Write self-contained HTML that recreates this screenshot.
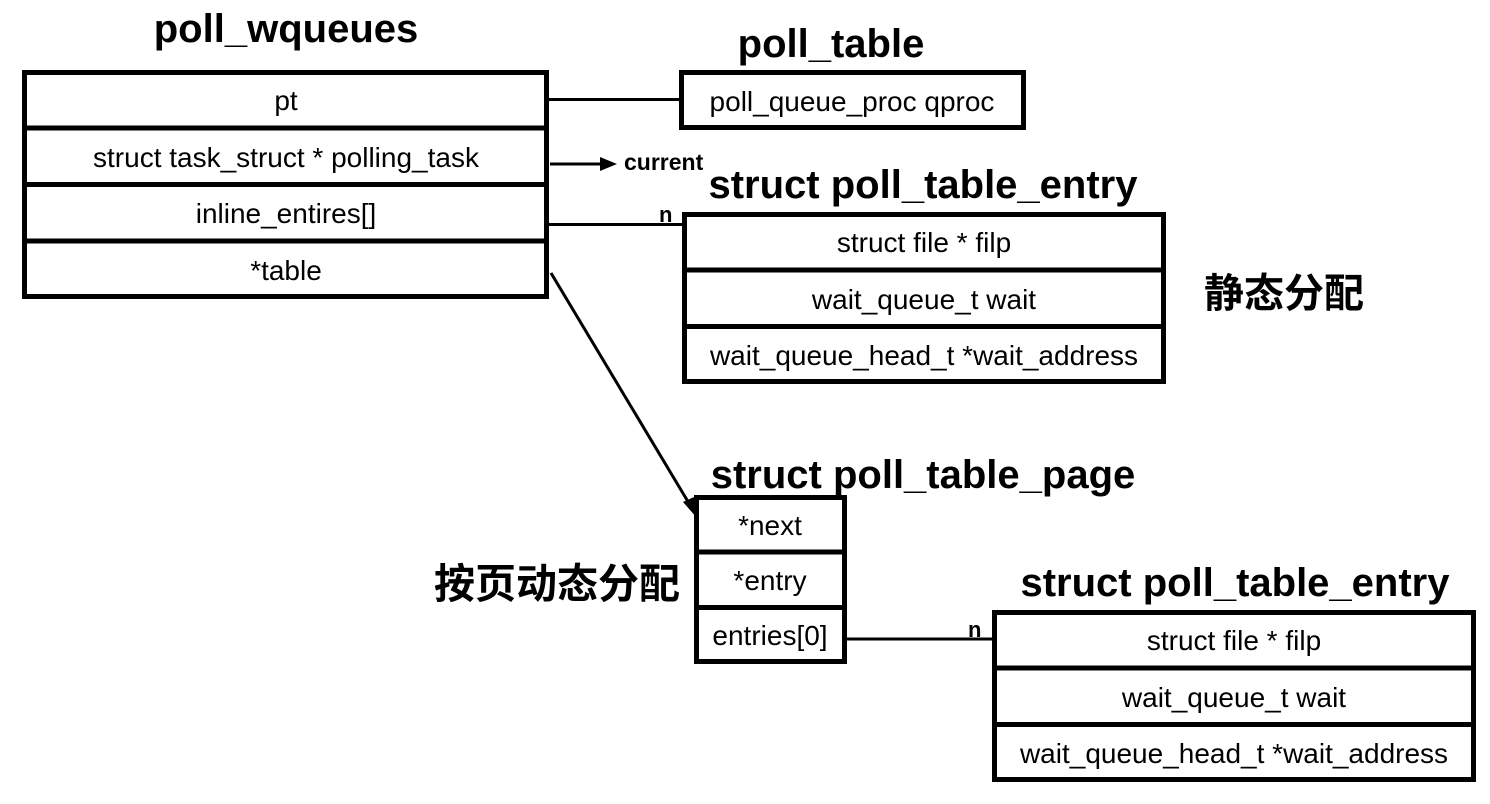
<!DOCTYPE html>
<html><head><meta charset="utf-8"><style>
html,body{margin:0;padding:0;background:#fff;}
svg{display:block}
text{font-family:"Liberation Sans","Noto Sans CJK SC",sans-serif;fill:#000}
.b{font-size:28px;text-anchor:middle}
.t{font-size:40px;font-weight:bold;text-anchor:middle}
.cj{font-size:40px;font-weight:bold;font-family:"Noto Sans CJK SC",sans-serif}
</style></head><body>
<svg width="1490" height="804" viewBox="0 0 1490 804">
<g fill="none" stroke="#000">
<rect x="24.5" y="72.5" width="522" height="224" stroke-width="5"/>
<line x1="24" y1="128" x2="547" y2="128" stroke-width="5"/>
<line x1="24" y1="184.5" x2="547" y2="184.5" stroke-width="5"/>
<line x1="24" y1="241" x2="547" y2="241" stroke-width="5"/>
<rect x="681.5" y="72.5" width="342" height="55" stroke-width="5"/>
<rect x="684.5" y="214.5" width="479" height="167" stroke-width="5"/>
<line x1="684" y1="270" x2="1164" y2="270" stroke-width="5"/>
<line x1="684" y1="326.5" x2="1164" y2="326.5" stroke-width="5"/>
<rect x="696.5" y="497.5" width="148" height="164" stroke-width="5"/>
<line x1="696" y1="552" x2="845" y2="552" stroke-width="5"/>
<line x1="696" y1="607.5" x2="845" y2="607.5" stroke-width="5"/>
<rect x="994.5" y="612.5" width="479" height="167" stroke-width="5"/>
<line x1="994" y1="668" x2="1474" y2="668" stroke-width="5"/>
<line x1="994" y1="724.5" x2="1474" y2="724.5" stroke-width="5"/>
<line x1="549" y1="99.5" x2="681" y2="99.5" stroke-width="3"/>
<line x1="550" y1="164" x2="602" y2="164" stroke-width="3"/>
<line x1="549" y1="224.5" x2="684" y2="224.5" stroke-width="3"/>
<line x1="847" y1="639" x2="994" y2="639" stroke-width="3"/>
<line x1="551" y1="273" x2="690" y2="505" stroke-width="3"/>
</g>
<polygon points="600,157 617,164 600,171" fill="#000"/>
<polygon points="683,502 697,518 694,497" fill="#000"/>

<text class="t" x="286" y="42">poll_wqueues</text>
<text class="t" x="831" y="57">poll_table</text>
<text class="t" x="923" y="198">struct poll_table_entry</text>
<text class="t" x="923" y="488">struct poll_table_page</text>
<text class="t" x="1235" y="596">struct poll_table_entry</text>

<text class="b" x="286" y="110">pt</text>
<text class="b" x="286" y="167">struct task_struct * polling_task</text>
<text class="b" x="286" y="223">inline_entires[]</text>
<text class="b" x="286" y="280">*table</text>
<text class="b" x="852" y="111">poll_queue_proc qproc</text>
<text x="624" y="170" style="font-size:23px;font-weight:bold">current</text>
<text x="659" y="222" style="font-size:22px;font-weight:bold">n</text>
<text x="968" y="637" style="font-size:22px;font-weight:bold">n</text>

<text class="b" x="924" y="252">struct file * filp</text>
<text class="b" x="924" y="309">wait_queue_t wait</text>
<text class="b" x="924" y="365">wait_queue_head_t *wait_address</text>

<text class="b" x="770" y="535">*next</text>
<text class="b" x="770" y="590">*entry</text>
<text class="b" x="770" y="645">entries[0]</text>

<text class="b" x="1234" y="650">struct file * filp</text>
<text class="b" x="1234" y="707">wait_queue_t wait</text>
<text class="b" x="1234" y="763">wait_queue_head_t *wait_address</text>

<text class="cj" x="1204" y="307">静态分配</text>
<text class="cj" x="434" y="598" style="font-size:41px">按页动态分配</text>
</svg>
</body></html>
